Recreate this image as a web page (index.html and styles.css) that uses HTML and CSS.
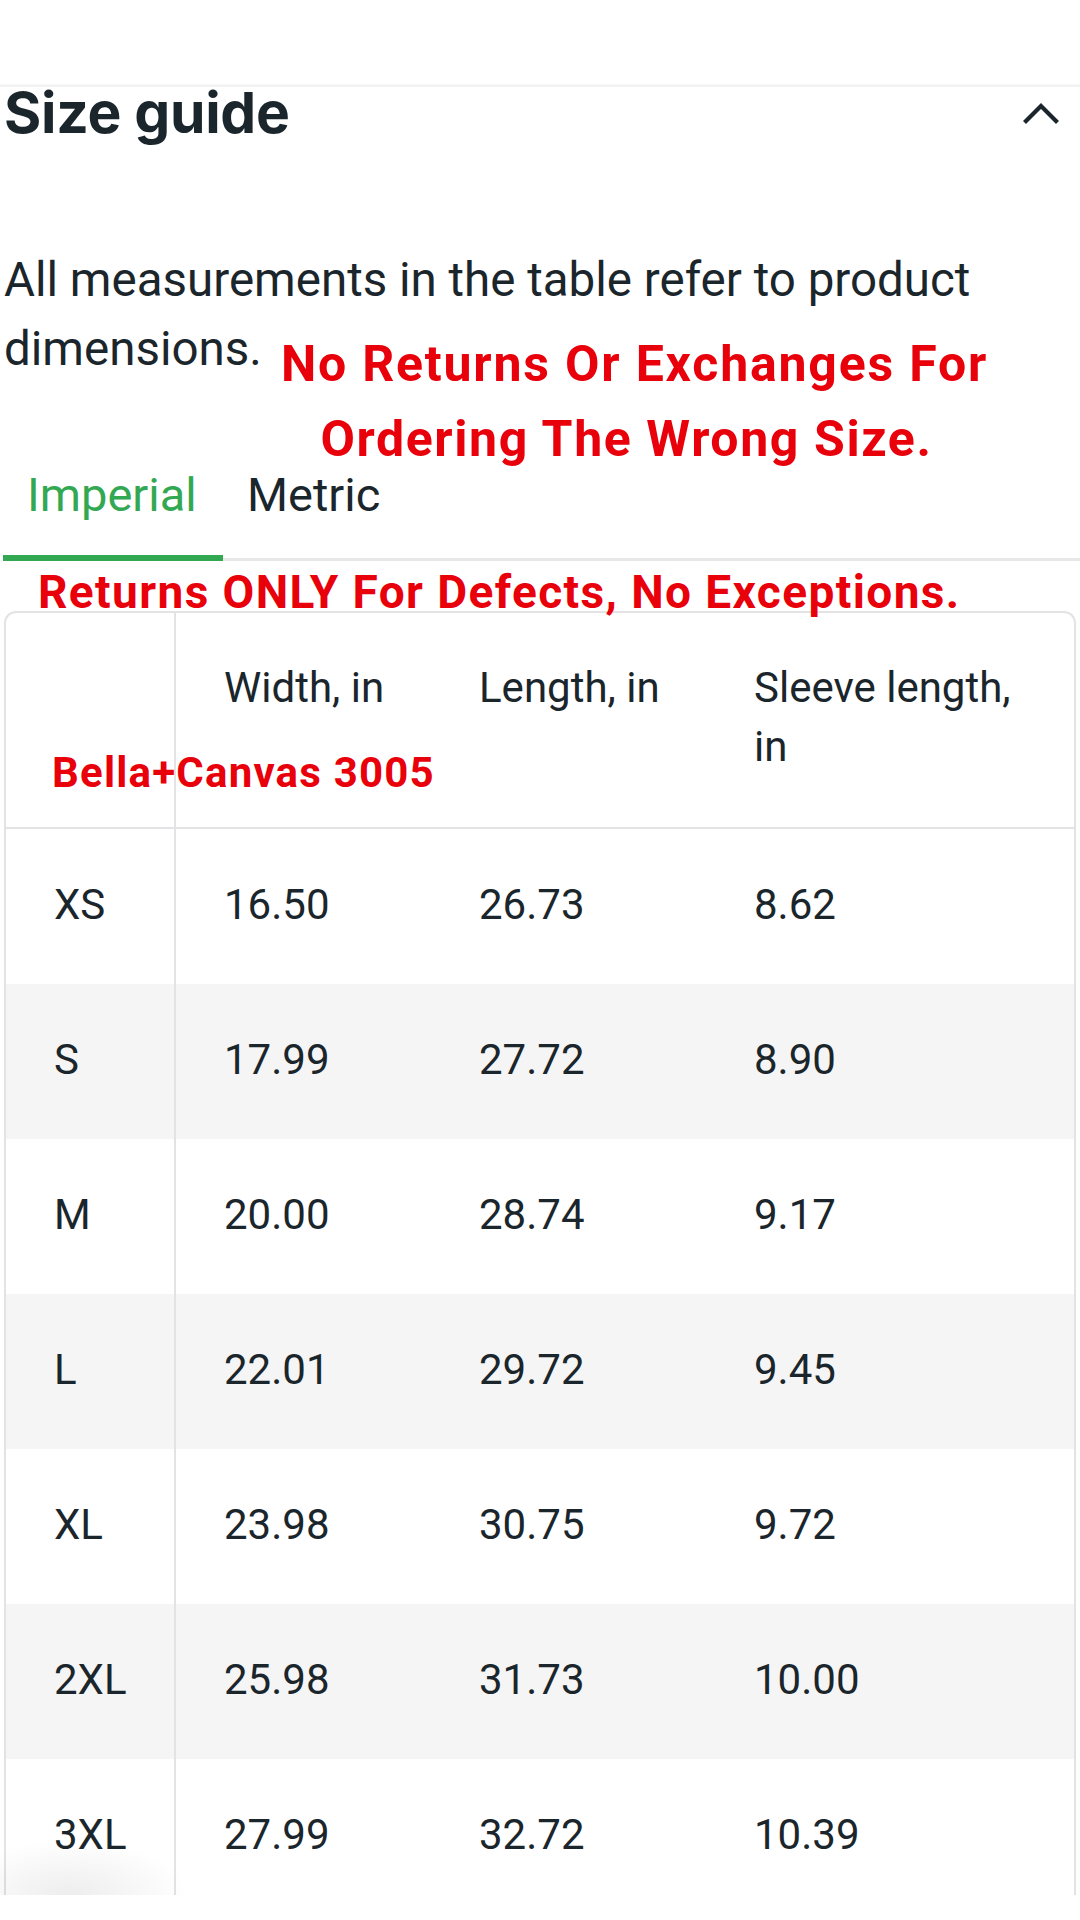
FILE: index.html
```html
<!DOCTYPE html>
<html lang="en">
<head>
<meta charset="utf-8">
<title>Size guide</title>
<link rel="stylesheet" href="styles.css">
</head>
<body>
<div class="page">
  <div class="topspace"></div>
  <div class="divider"></div>
  <header class="head">
    <h1 class="title">Size guide</h1>
    <svg class="chev" width="38" height="22" viewBox="0 0 38 22" aria-hidden="true">
      <polyline points="2.5,19.5 19,3 35.5,19.5" fill="none" stroke="#1b262c" stroke-width="4.2" stroke-linecap="butt" stroke-linejoin="miter"/>
    </svg>
  </header>

  <p class="desc">All measurements in the table refer to product dimensions.</p>

  <nav class="tabs">
    <div class="tab active">Imperial</div>
    <div class="tab">Metric</div>
  </nav>

  <div class="table">
    <div class="row hdr">
      <div class="cell first"></div>
      <div class="cell">Width, in</div>
      <div class="cell">Length, in</div>
      <div class="cell">Sleeve length,<br>in</div>
    </div>
    <div class="row"><div class="cell first">XS</div><div class="cell">16.50</div><div class="cell">26.73</div><div class="cell">8.62</div></div>
    <div class="row alt"><div class="cell first">S</div><div class="cell">17.99</div><div class="cell">27.72</div><div class="cell">8.90</div></div>
    <div class="row"><div class="cell first">M</div><div class="cell">20.00</div><div class="cell">28.74</div><div class="cell">9.17</div></div>
    <div class="row alt"><div class="cell first">L</div><div class="cell">22.01</div><div class="cell">29.72</div><div class="cell">9.45</div></div>
    <div class="row"><div class="cell first">XL</div><div class="cell">23.98</div><div class="cell">30.75</div><div class="cell">9.72</div></div>
    <div class="row alt"><div class="cell first">2XL</div><div class="cell">25.98</div><div class="cell">31.73</div><div class="cell">10.00</div></div>
    <div class="row"><div class="cell first">3XL</div><div class="cell">27.99</div><div class="cell">32.72</div><div class="cell">10.39</div></div>
  </div>

  <div class="note note-top"><span class="l1">No Returns Or Exchanges For</span><span class="l2">Ordering The Wrong Size.</span></div>
  <div class="note note-mid">Returns ONLY For Defects, No Exceptions.</div>
  <div class="note note-brand">Bella+Canvas 3005</div>
  <div class="fab-shadow"></div>
</div>
</body>
</html>
```

FILE: styles.css
```css
* { box-sizing: border-box; }

html, body {
  margin: 0;
  padding: 0;
  background: #ffffff;
}

body {
  font-family: Roboto, "Liberation Sans", sans-serif;
  color: #1b262c;
}

.page {
  position: relative;
  width: 1080px;
  height: 1895px;
  overflow: hidden;
  padding: 0 4px;
}

.topspace { height: 84px; }

.divider {
  height: 3px;
  margin: 0 -4px;
  background: linear-gradient(#f7f7f7, #f1f1f1);
}

.head {
  display: flex;
  align-items: center;
  justify-content: space-between;
  padding-right: 16px;
}

.title {
  margin: 0;
  font-family: Inter, "Noto Sans", sans-serif;
  font-weight: 700;
  font-size: 57px;
  line-height: 52px;
  letter-spacing: -0.3px;
  color: #1b262c;
}

.chev { display: block; margin-top: 1px; }

.desc {
  margin: 107px 0 0;
  font-size: 47.5px;
  line-height: 69px;
  color: #1b262c;
}

.tabs {
  display: flex;
  margin-left: -1px;
  margin-right: -4px;
  border-bottom: 3px solid #e7e7e9;
}

.tab {
  padding: 83px 24px 32px;
  font-size: 47px;
  line-height: 56px;
  color: #1b262c;
  border-bottom: 6px solid transparent;
  margin-bottom: -3px;
}

.tab.active {
  width: 220px;
  color: #33a853;
  border-bottom-color: #33a853;
}

.table {
  margin-top: 50px;
  border: 2px solid #e3e3e6;
  border-bottom: none;
  border-radius: 12px 12px 0 0;
  overflow: hidden;
}

.row {
  display: grid;
  grid-template-columns: 170px 255px 275px 1fr;
  height: 155px;
  align-items: center;
  padding-bottom: 4px;
  font-size: 42px;
}

.row.alt { background: #f5f5f5; }

.row.hdr {
  height: 216px;
  padding-bottom: 0;
  align-items: start;
  border-bottom: 2px solid #e3e3e6;
}

.cell {
  padding-left: 48px;
  white-space: nowrap;
}

.hdr .cell {
  padding-top: 45px;
  line-height: 59px;
  height: 100%;
}

.cell.first {
  padding-left: 48px;
  height: calc(100% + 4px);
  margin-bottom: -4px;
  display: flex;
  align-items: center;
  padding-bottom: 4px;
  border-right: 2px solid #e3e3e6;
}

.hdr .cell.first {
  height: 100%;
  margin-bottom: 0;
  padding-bottom: 0;
}

.note {
  position: absolute;
  font-family: Roboto, "Liberation Sans", sans-serif;
  font-weight: 700;
  color: #e8000b;
  white-space: nowrap;
}

.note-top {
  left: 271px;
  top: 327px;
  width: 727px;
  text-align: center;
  font-size: 50px;
  line-height: 75px;
  letter-spacing: 1.8px;
}

.note-top .l1,
.note-top .l2 { display: block; }

.note-top .l2 {
  margin-right: 16px;
  letter-spacing: 1.6px;
}

.note-mid {
  left: 38px;
  top: 567px;
  font-size: 46px;
  line-height: 50px;
  letter-spacing: 1.4px;
}

.note-brand {
  left: 52px;
  top: 748px;
  font-size: 42px;
  line-height: 50px;
  letter-spacing: 1.2px;
}

.fab-shadow {
  position: absolute;
  left: 0;
  top: 1835px;
  width: 200px;
  height: 60px;
  background: radial-gradient(ellipse at 35% 100%, rgba(0,0,0,0.07), rgba(0,0,0,0) 65%);
  pointer-events: none;
}
```
